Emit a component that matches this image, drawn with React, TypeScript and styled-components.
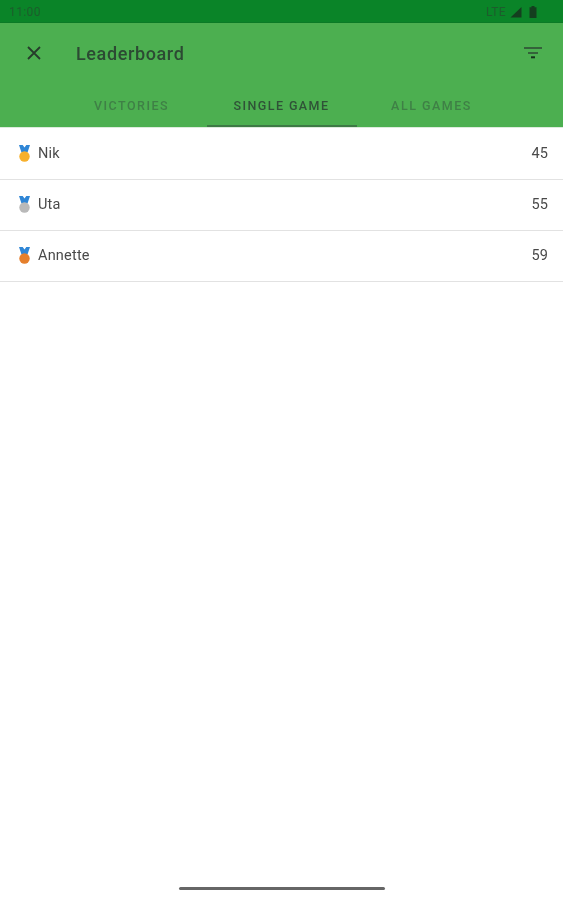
import React, { FC } from "react";
import styled, { createGlobalStyle } from "styled-components";

const GlobalStyle = createGlobalStyle`
  html, body {
    margin: 0;
    padding: 0;
    background: #fff;
    font-family: Roboto, "Noto Sans", sans-serif;
  }
`;

const Screen = styled.div`
  width: 563px;
  height: 900px;
  display: flex;
  flex-direction: column;
  overflow: hidden;
  background: #fff;
  filter: blur(0.6px);
`;

const StatusBar = styled.div`
  height: 23px;
  flex: none;
  display: flex;
  align-items: center;
  justify-content: space-between;
  padding: 1px 26px 0 9px;
  box-sizing: border-box;
  background: #0a8428;
  border-bottom: 1px solid #0b7a26;
  color: #1d5c2c;
  font-size: 12px;
  letter-spacing: 0.4px;
`;

const StatusIcons = styled.div`
  display: flex;
  align-items: center;
  gap: 4px;
`;

const SignalIcon = styled.svg`
  margin-right: 3px;
`;

const Header = styled.header`
  flex: none;
  height: 105px;
  display: flex;
  flex-direction: column;
  background: #4caf50;
  border-bottom: 1px solid #dcebdc;
  box-sizing: border-box;
`;

const Toolbar = styled.div`
  height: 60px;
  flex: none;
  display: flex;
  align-items: center;
  padding: 0 21px 0 27px;
`;

const Title = styled.h1`
  flex: 1;
  margin: 0 0 0 35px;
  font-size: 18px;
  font-weight: 500;
  letter-spacing: 0.62px;
  color: #2c4a33;
`;

const Tabs = styled.nav`
  flex: 1;
  display: flex;
  justify-content: center;
`;

const Tab = styled.div<{ $active?: boolean }>`
  width: 150px;
  display: flex;
  align-items: center;
  justify-content: center;
  padding-top: 2px;
  box-sizing: border-box;
  font-size: 12.5px;
  font-weight: 500;
  letter-spacing: ${(p) => (p.$active ? "1.42px" : "1.5px")};
  color: ${(p) => (p.$active ? "#2f5237" : "#3f8046")};
  border-bottom: 2px solid ${(p) => (p.$active ? "#3d7a45" : "transparent")};
`;

const List = styled.div`
  flex: none;
  padding-top: 1px;
`;

const Row = styled.div`
  height: 51px;
  box-sizing: border-box;
  display: flex;
  align-items: center;
  padding: 0 15px 1px 17px;
  border-bottom: 1px solid #e2e2e2;
  font-size: 14.5px;
  color: #4a4a4a;
`;

const Name = styled.span`
  flex: 1;
  margin-left: 6px;
  letter-spacing: 0.2px;
`;

const Score = styled.span`
  letter-spacing: 0.1px;
`;

const HomeArea = styled.div`
  flex: 1;
  display: flex;
  align-items: flex-end;
  justify-content: center;
  padding-bottom: 10px;
`;

const HomeHandle = styled.div`
  width: 206px;
  height: 3px;
  border-radius: 2px;
  background: #666;
`;

const Medal: FC<{ color: string }> = ({ color }) => (
  <svg width="15" height="18" viewBox="0 0 15 18">
    <path d="M2 0h3.700L7.500 2.500 9.300 0H13L10.500 7.500h-6z" fill="#2f86d6" />
    <circle cx="7.500" cy="11.500" r="5.200" fill={color} />
  </svg>
);

const rows = [
  { name: "Nik", score: 45, medal: "#f7b02c" },
  { name: "Uta", score: 55, medal: "#b9b9b9" },
  { name: "Annette", score: 59, medal: "#e57f2c" },
];

const tabs = ["VICTORIES", "SINGLE GAME", "ALL GAMES"];

export default function App() {
  return (
    <Screen>
      <GlobalStyle />
      <StatusBar>
        <span>11:00</span>
        <StatusIcons>
          <span>LTE</span>
          <SignalIcon width="12" height="12" viewBox="0 0 12 12">
            <path d="M11.500 1v10.500H0.500z" fill="#143f1f" />
          </SignalIcon>
          <svg width="8" height="12" viewBox="0 0 8 12">
            <path d="M2.500 0h3v1.200H7.500V12H0.500V1.200h2z" fill="#143f1f" />
          </svg>
        </StatusIcons>
      </StatusBar>
      <Header>
        <Toolbar>
          <svg width="14" height="14" viewBox="0 0 14 14">
            <path d="M1 1l12 12M13 1L1 13" stroke="#263c2b" strokeWidth="1.8" fill="none" />
          </svg>
          <Title>Leaderboard</Title>
          <svg width="18" height="14" viewBox="0 0 18 14">
            <path d="M0 2h18M4 7h10" stroke="#2c4a33" strokeWidth="1.300" fill="none" />
            <path d="M7 11.300h4" stroke="#16301c" strokeWidth="2" fill="none" />
          </svg>
        </Toolbar>
        <Tabs>
          {tabs.map((tab) => (
            <Tab key={tab} $active={tab === "SINGLE GAME"}>
              {tab}
            </Tab>
          ))}
        </Tabs>
      </Header>
      <List>
        {rows.map((row) => (
          <Row key={row.name}>
            <Medal color={row.medal} />
            <Name>{row.name}</Name>
            <Score>{row.score}</Score>
          </Row>
        ))}
      </List>
      <HomeArea>
        <HomeHandle />
      </HomeArea>
    </Screen>
  );
}
